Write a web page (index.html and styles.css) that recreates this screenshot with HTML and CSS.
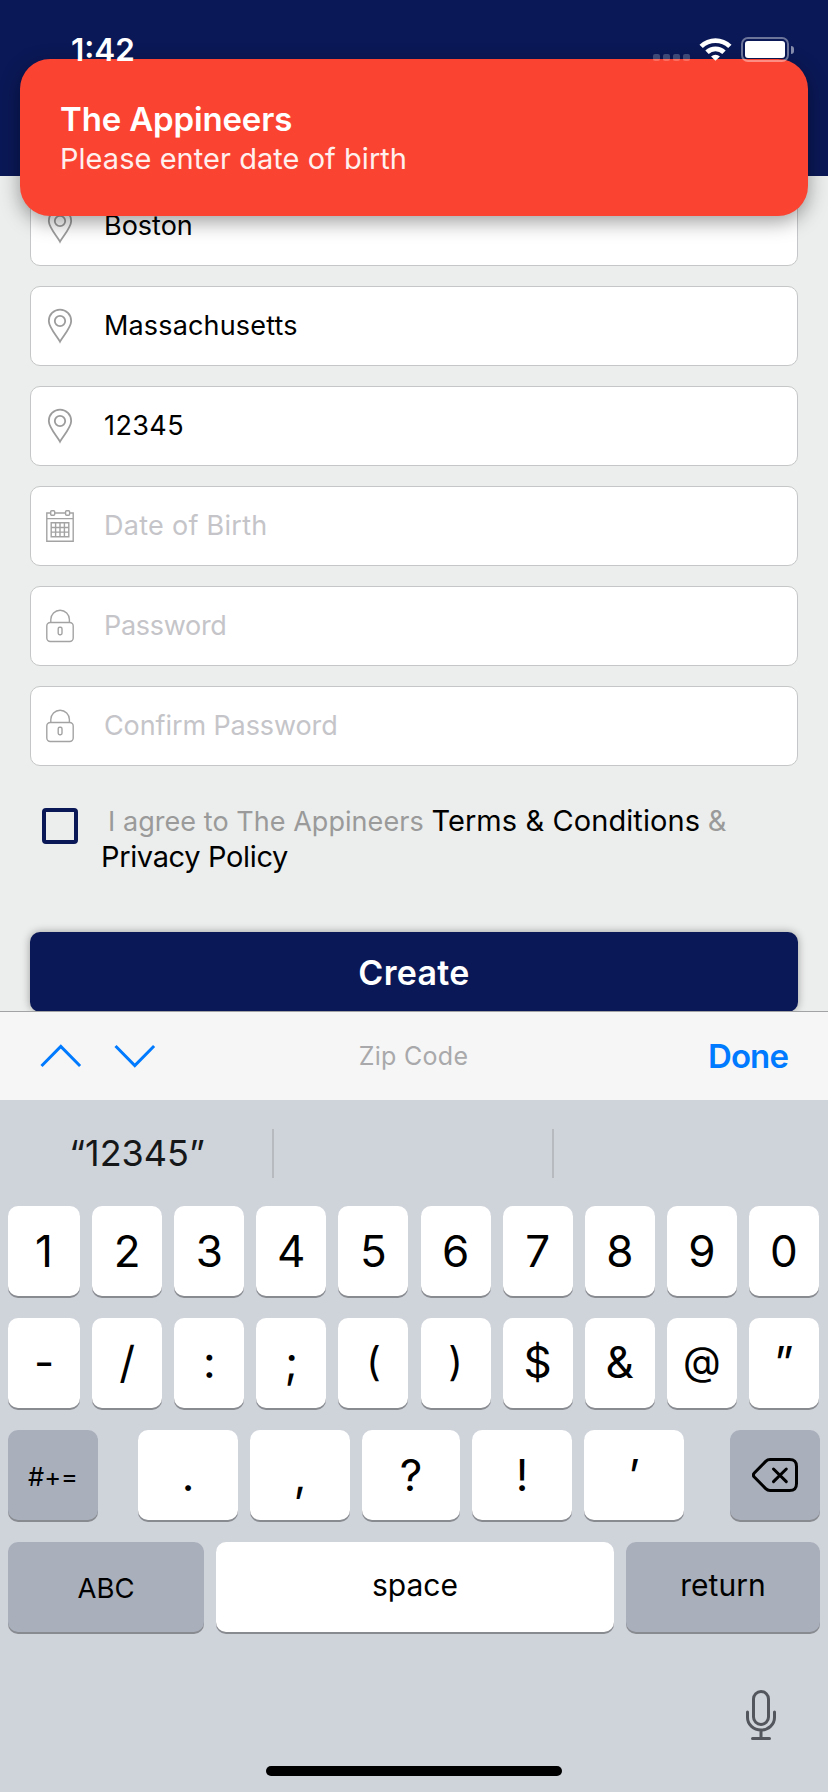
FILE: index.html
```html
<!DOCTYPE html>
<html lang="en">
<head>
<meta charset="utf-8">
<title>The Appineers</title>
<link rel="stylesheet" href="styles.css">
</head>
<body>
<svg class="defs" aria-hidden="true">
  <symbol id="pin" viewBox="0 0 28 36">
    <path d="M14 33.6C12 29.5 2.8 19.5 2.8 12.9a11.2 11.2 0 0 1 22.4 0C25.2 19.500 16 29.500 14 33.600Z"/>
    <circle cx="14" cy="13" r="5.200"/>
  </symbol>
  <symbol id="calendar" viewBox="0 0 28 34">
    <path d="M4.500 4H.8v28.200h26.400V4h-3.700M9 4h10M.8 9.600h26.400"/>
    <rect x="4.700" y="1.800" width="4" height="4.400" rx="1"/>
    <rect x="19.600" y="1.800" width="4" height="4.400" rx="1"/>
    <path d="M5.200 13.800h17.600v14H5.200zM9.600 13.800v14M14 13.800v14M18.400 13.800v14M5.200 18.500h17.600M5.200 23.100h17.600"/>
  </symbol>
  <symbol id="lock" viewBox="0 0 28 34">
    <rect x=".8" y="13.500" width="26.400" height="19" rx="3.500"/>
    <path d="M4.800 13.500v-3a9.300 9.300 0 0 1 18.600 0v3"/>
    <rect x="12.200" y="18.300" width="3.800" height="7.400" rx="1.400"/>
  </symbol>
</svg>

<div class="screen">
  <header class="header">
    <div class="status">
      <span class="time">1:42</span>
      <div class="indicators">
        <div class="dots"><i></i><i></i><i></i><i></i></div>
        <svg class="wifi" viewBox="0 0 34 24">
          <path d="M.5 7.500a24 24 0 0 1 33 0l-3.400 3.500a19 19 0 0 0-26.200 0z"/>
          <path d="M6.500 13.600a15.300 15.300 0 0 1 21 0l-3.500 3.500a10.300 10.300 0 0 0-14 0z"/>
          <path d="M12.400 19.600a6.900 6.900 0 0 1 9.200 0L17 24z"/>
        </svg>
        <div class="battery"><span class="cell"><b></b></span><span class="nub"></span></div>
      </div>
    </div>
  </header>

  <div class="banner">
    <div class="banner-title">The Appineers</div>
    <div class="banner-text">Please enter date of birth</div>
  </div>

  <main class="form">
    <div class="field"><svg class="icon pin"><use href="#pin"/></svg><span>Boston</span></div>
    <div class="field"><svg class="icon pin"><use href="#pin"/></svg><span class="t-state">Massachusetts</span></div>
    <div class="field"><svg class="icon pin"><use href="#pin"/></svg><span class="t-zip">12345</span></div>
    <div class="field empty"><svg class="icon"><use href="#calendar"/></svg><span class="t-dob">Date of Birth</span></div>
    <div class="field empty"><svg class="icon"><use href="#lock"/></svg><span class="t-pass">Password</span></div>
    <div class="field empty"><svg class="icon"><use href="#lock"/></svg><span class="t-confirm">Confirm Password</span></div>
    <div class="agree">
      <span class="checkbox"></span>
      <div class="terms">
        <div class="line first"><span>I agree to The Appineers</span> <a>Terms &amp; Conditions</a> <span class="amp">&amp;</span></div>
        <div class="line"><a class="t-privacy">Privacy Policy</a></div>
      </div>
    </div>
    <div class="create">Create</div>
  </main>

  <div class="accessory">
    <svg class="arrows" viewBox="0 0 116 24">
      <path d="M1.500 22 20.800 2.500 40.100 22M75.500 2 94.800 21.500 114.100 2"/>
    </svg>
    <span class="hint">Zip Code</span>
    <span class="done">Done</span>
  </div>

  <div class="keyboard">
    <div class="suggest"><span>“12345”</span><span></span><span></span></div>
    <div class="row ten">
      <span class="key">1</span><span class="key">2</span><span class="key">3</span><span class="key">4</span><span class="key">5</span><span class="key">6</span><span class="key">7</span><span class="key">8</span><span class="key">9</span><span class="key">0</span>
    </div>
    <div class="row ten symbols">
      <span class="key">-</span><span class="key">/</span><span class="key">:</span><span class="key">;</span><span class="key paren">(</span><span class="key paren">)</span><span class="key">$</span><span class="key">&amp;</span><span class="key at">@</span><span class="key">”</span>
    </div>
    <div class="row punct">
      <span class="key dark small">#+=</span>
      <div class="middle"><span class="key">.</span><span class="key">,</span><span class="key">?</span><span class="key">!</span><span class="key">’</span></div>
      <span class="key dark backspace">
        <svg class="delete" viewBox="0 0 46 34"><path d="M18 1.500h19.500c5 0 7 2 7 7v17c0 5-2 7-7 7H18c-2 0-3-.6-4.300-1.900L2.300 19c-1.200-1.300-1.200-2.700 0-4L13.700 3.400C15 2.100 16 1.500 18 1.500Z"/><path d="m21.500 11 12.800 12.600M34.300 11 21.500 23.600"/></svg>
      </span>
    </div>
    <div class="row bottom">
      <span class="key dark abc">ABC</span><span class="key word">space</span><span class="key dark word">return</span>
    </div>
    <div class="dock">
      <svg class="mic" viewBox="0 0 30 50"><rect x="7.500" y="1.500" width="15" height="33" rx="7.500"/><path d="M1.500 22v5.500a13.500 12.500 0 0 0 27 0V22M15 40v8M6.500 48.500h17"/></svg>
      <div class="home"></div>
    </div>
  </div>
</div>
</body>
</html>
```
FILE: styles.css
```css
* { box-sizing: border-box; }
body { margin: 0; font-family: Inter, "Liberation Sans", sans-serif; color: #000; }
.defs { position: absolute; width: 0; height: 0; }
.screen { position: relative; display: flex; flex-direction: column; width: 828px; height: 1792px; overflow: hidden; background: #eceeed; }

.header { height: 176px; padding: 37px 34px 0 71px; background: #0a1857; }
.status { position: relative; z-index: 3; display: flex; justify-content: space-between; color: #fff; }
.time { font-size: 31.500px; font-weight: 600; line-height: 25px; }
.indicators { display: flex; }
.dots { display: flex; gap: 3px; padding-top: 17px; margin-right: 9px; }
.dots i { width: 7px; height: 7px; border-radius: 2px; background: rgba(255,255,255,.22); }
.wifi { width: 33px; height: 24px; margin-right: 9px; fill: #fff; }
.battery { display: flex; align-items: center; gap: 2px; height: 25px; }
.cell { width: 48px; height: 25px; padding: 2px; border: 2px solid rgba(255,255,255,.4); border-radius: 7px; }
.cell b { display: block; width: 40px; height: 17px; border-radius: 3px; background: #fff; }
.nub { width: 3px; height: 8px; border-radius: 0 3px 3px 0; background: rgba(255,255,255,.5); }

.banner { position: absolute; z-index: 2; left: 20px; top: 59px; width: 788px; height: 157px; padding: 40px; border-radius: 30px; background: #fb4332; color: #fff; box-shadow: 0 6px 20px rgba(0,0,0,.38); }
.banner-title { font-size: 33px; font-weight: 600; line-height: 40px; letter-spacing: -.15px; }
.banner-text { font-size: 29px; line-height: 39px; letter-spacing: .04px; color: #fff0ee; }

.form { display: flex; flex-direction: column; gap: 20px; height: 835px; padding: 10px 30px 0; }
.field { display: flex; align-items: center; flex: none; height: 80px; padding-left: 15px; gap: 30px; border: 1px solid #c5c6c7; border-radius: 10px; background: #fff; font-size: 27px; white-space: nowrap; }
.field span { padding-bottom: 2px; }
.t-state { letter-spacing: .16px; }
.t-zip { letter-spacing: .4px; }
.t-dob { letter-spacing: .28px; }
.t-pass { letter-spacing: -.3px; }
.t-confirm { letter-spacing: -.1px; }
.empty { color: #c5c5c9; }
.icon { width: 28px; height: 34px; fill: none; stroke: #a3a3a3; stroke-width: 1.400; }
.pin { height: 36px; stroke: #9c9c9c; stroke-width: 1.800; }
.agree { display: flex; flex: none; height: 126px; padding: 16px 0 0 12px; gap: 23px; }
.checkbox { width: 36px; height: 36px; margin-top: 6px; border: 4px solid #0a1857; border-radius: 4px; }
.terms { padding-top: 1px; font-size: 27px; letter-spacing: .05px; color: #9a9a9a; white-space: nowrap; }
.line { height: 36px; line-height: 36px; }
.first { padding-left: 7px; }
.terms a { font-size: 29px; letter-spacing: .08px; color: #000; }
.terms .t-privacy { letter-spacing: -.35px; }
.amp { font-size: 29px; }
.create { flex: none; height: 80px; border-radius: 10px; background: #0a1857; color: #fff; font-size: 34px; font-weight: 600; line-height: 81px; letter-spacing: .3px; text-align: center; box-shadow: 0 0 9px rgba(0,0,0,.35); }

.accessory { position: relative; z-index: 1; display: grid; grid-template-columns: 1fr auto 1fr; align-items: center; height: 89px; padding: 0 40px 0 39px; border-top: 1px solid #a2a3a4; background: #f6f6f6; }
.arrows { width: 118px; height: 24px; fill: none; stroke: #007aff; stroke-width: 3; }
.hint { font-size: 25px; letter-spacing: .3px; color: #a9a9ab; }
.done { justify-self: end; color: #007aff; font-size: 33px; font-weight: 600; letter-spacing: -.9px; }

.keyboard { display: flex; flex-direction: column; height: 692px; background: #cfd3da; }
.suggest { display: grid; grid-template-columns: 274px 280px 274px; height: 48px; margin: 29px 0; line-height: 49px; font-size: 36px; text-align: center; color: #151718; }
.suggest span + span { border-left: 2px solid #b7babf; margin-left: -2px; }
.row { height: 90px; margin: 0 8px 22px; }
.ten { display: grid; grid-template-columns: 72px repeat(9, 70px); justify-content: space-between; width: 811px; }
.key { display: flex; align-items: center; justify-content: center; height: 90px; border-radius: 10px; background: #fff; box-shadow: 0 2px 0 #888b90; font-size: 44px; }
.symbols .key { padding-bottom: 3px; }
.symbols .paren { font-size: 40px; }
.symbols .at { padding-bottom: 5px; font-size: 39px; }
.punct { display: flex; }
.middle { display: grid; grid-template-columns: 100px 100px 98px 100px 100px; gap: 12px; margin-left: 40px; }
.dark { background: #a9afbb; }
.small { width: 90px; padding-top: 3px; font-size: 25.500px; }
.backspace { width: 90px; margin-left: auto; }
.bottom { display: grid; grid-template-columns: 196px 398px 194px; gap: 12px; }
.abc { padding-top: 2px; font-size: 27.500px; }
.word { padding-bottom: 5px; font-size: 30px; }
.delete { width: 46px; height: 34px; fill: none; stroke: #000; stroke-width: 3; stroke-linecap: round; }
.dock { display: flex; flex-direction: column; align-items: center; height: 138px; padding-top: 36px; }
.mic { align-self: flex-end; width: 30px; height: 50px; margin-right: 52px; fill: none; stroke: #53565d; stroke-width: 3; stroke-linecap: round; }
.home { width: 296px; height: 10px; margin-top: 26px; border-radius: 5px; background: #000; }
```
